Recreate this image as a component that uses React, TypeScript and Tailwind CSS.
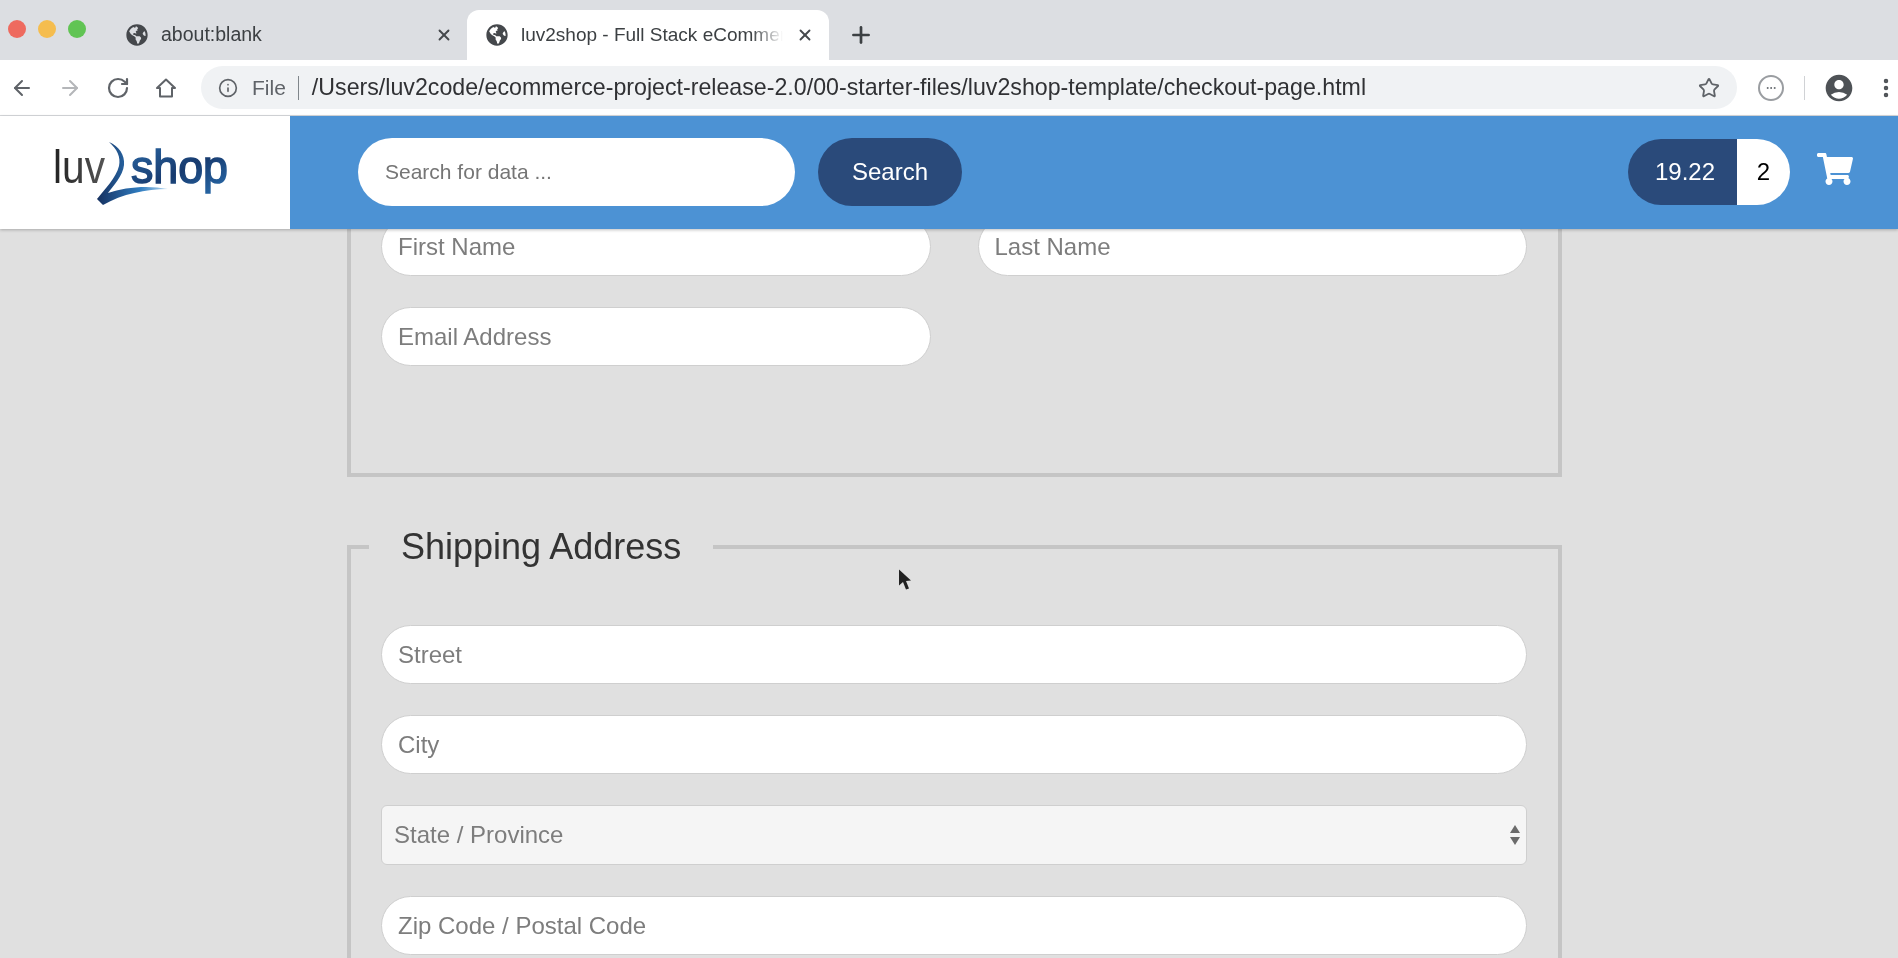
import { ArrowLeft, ArrowRight, Ellipsis, EllipsisVertical, Info, Plus, RotateCw, Star, X } from 'lucide-react';
import { FaGlobeAmericas, FaShoppingCart } from 'react-icons/fa';
import { MdAccountCircle } from 'react-icons/md';

const inputClass =
  'w-full h-[59px] rounded-full bg-white border border-[#cfcfcf] px-4 text-[24px] text-[#333] placeholder:text-[#7d7d7d] outline-none';

function Logo() {
  return (
    <svg viewBox="0 0 290 113" className="w-[290px] h-[113px]">
      <defs>
        <linearGradient id="shopFill" x1="0" y1="0" x2="1" y2="1">
          <stop offset="0" stopColor="#2c6aa8" />
          <stop offset="0.55" stopColor="#173a6e" />
          <stop offset="1" stopColor="#2a6fb0" />
        </linearGradient>
        <linearGradient id="luvFill" x1="0" y1="0" x2="1" y2="0">
          <stop offset="0" stopColor="#222" />
          <stop offset="1" stopColor="#555" />
        </linearGradient>
        <linearGradient id="swooshFill" x1="0" y1="0" x2="1" y2="0">
          <stop offset="0" stopColor="#16305f" />
          <stop offset="0.6" stopColor="#2f7cc0" />
          <stop offset="1" stopColor="#b8d8f0" />
        </linearGradient>
      </defs>
      <text x="53" y="67" fontFamily="Liberation Sans, sans-serif" fontSize="46" fill="url(#luvFill)" textLength="52" lengthAdjust="spacingAndGlyphs">
        luv
      </text>
      <text x="131" y="67" fontFamily="Liberation Sans, sans-serif" fontSize="46" stroke="url(#shopFill)" strokeWidth="1.5" fill="url(#shopFill)" textLength="97" lengthAdjust="spacingAndGlyphs">
        shop
      </text>
      <path
        d="M109 26 C119 30 125 39 124 49 C123 60 113 70 108 77 C125 71 148 69 168 73 C146 73 122 78 103 89 L97 83 C105 73 116 62 119 50 C121 41 117 33 109 26 Z"
        fill="url(#swooshFill)"
      />
    </svg>
  );
}

function BrowserChrome() {
  return (
    <div className="font-['Liberation_Sans',sans-serif]">
      <div className="h-[60px] bg-[#dcdee2] flex items-end">
        <div className="flex gap-[12px] pl-[8px] self-center -mt-[2px] w-[121px]">
          <span className="w-[18px] h-[18px] rounded-full bg-[#ee6a5f]" />
          <span className="w-[18px] h-[18px] rounded-full bg-[#f5bd4f]" />
          <span className="w-[18px] h-[18px] rounded-full bg-[#61c454]" />
        </div>
        <div className="w-[346px] h-[50px] flex items-center pl-[5px] pr-[14px] gap-[13px] text-[#3c4043] text-[19.5px]">
          <FaGlobeAmericas className="w-[22px] h-[22px] text-[#45484c] shrink-0" />
          <span className="flex-1">about:blank</span>
          <X className="w-[18px] h-[18px] text-[#45484c]" strokeWidth={2.5} />
        </div>
        <div className="w-[362px] h-[50px] bg-white rounded-t-[12px] flex items-center pl-[19px] pr-[15px] gap-[13px] text-[#3c4043] text-[19px]">
          <FaGlobeAmericas className="w-[22px] h-[22px] text-[#45484c] shrink-0" />
          <span className="flex-1 whitespace-nowrap overflow-hidden [mask-image:linear-gradient(to_right,black_88%,transparent)]">
            luv2shop - Full Stack eCommerce
          </span>
          <X className="w-[18px] h-[18px] text-[#45484c] shrink-0" strokeWidth={2.5} />
        </div>
        <div className="h-[50px] flex items-center pl-[19px]">
          <Plus className="w-[26px] h-[26px] text-[#3c4043]" strokeWidth={2.5} />
        </div>
      </div>
      <div className="h-[56px] bg-white flex items-center border-b border-[#d8dadd]">
        <div className="w-[201px] flex items-center pl-[10px] gap-[24px] text-[#5f6368]">
          <ArrowLeft className="w-[24px] h-[24px]" strokeWidth={2} />
          <ArrowRight className="w-[24px] h-[24px] text-[#b4b6b9]" strokeWidth={2} />
          <RotateCw className="w-[24px] h-[24px]" strokeWidth={2.2} />
          <svg viewBox="0 0 24 24" className="w-[24px] h-[24px] fill-none stroke-[#5f6368] stroke-2">
            <path d="M12 3.5 L3 12 H6 V20.5 H18 V12 H21 Z" strokeLinejoin="round" />
          </svg>
        </div>
        <div className="w-[1536px] h-[43px] rounded-full bg-[#f0f2f4] flex items-center pl-[17px] pr-[17px]">
          <Info className="w-[20px] h-[20px] text-[#5f6368] shrink-0" />
          <span className="ml-[14px] text-[21px] text-[#5f6368]">File</span>
          <span className="ml-[12px] w-px h-[24px] bg-[#80868b]" />
          <span className="ml-[13px] flex-1 text-[23.2px] text-[#303134] whitespace-nowrap">
            /Users/luv2code/ecommerce-project-release-2.0/00-starter-files/luv2shop-template/checkout-page.html
          </span>
          <Star className="w-[22px] h-[22px] text-[#5f6368]" strokeWidth={2} />
        </div>
        <div className="flex-1 flex items-center pl-[21px] text-[#5f6368]">
          <span className="w-[26px] h-[26px] rounded-full border-2 border-[#9a9da1] flex items-center justify-center">
            <Ellipsis className="w-[12px] h-[12px]" />
          </span>
          <span className="ml-[20px] w-px h-[24px] bg-[#d0d2d5]" />
          <MdAccountCircle className="ml-[18px] w-[32px] h-[32px] text-[#4e5256]" />
          <EllipsisVertical className="ml-[19px] w-[24px] h-[24px] text-[#4e5256]" strokeWidth={2.5} />
        </div>
      </div>
    </div>
  );
}

function Header() {
  return (
    <header className="relative z-10 h-[113px] flex shadow-[0_1px_3px_rgba(0,0,0,0.25)]">
      <div className="w-[290px] bg-white">
        <Logo />
      </div>
      <div className="flex-1 bg-[#4c92d4] flex items-center pl-[68px] pr-[45px] pb-[2px]">
        <input
          className="w-[437px] h-[68px] rounded-full bg-white px-[27px] text-[21px] placeholder:text-[#757575] outline-none"
          placeholder="Search for data ..."
        />
        <button className="ml-[23px] w-[144px] h-[68px] rounded-full bg-[#2a4a7a] text-white text-[24px]">Search</button>
        <div className="ml-auto flex items-center h-[66px]">
          <div className="w-[109px] h-full rounded-l-full bg-[#2a4a7a] text-white text-[24px] flex items-center justify-center pl-[5px]">
            19.22
          </div>
          <div className="w-[53px] h-full rounded-r-full bg-white text-black text-[24px] flex items-center justify-center">
            2
          </div>
          <FaShoppingCart className="ml-[27px] w-[36px] h-[32px] text-white -mt-[5px]" />
        </div>
      </div>
    </header>
  );
}

export default function App() {
  return (
    <div className="w-[1898px] h-[958px] overflow-hidden relative bg-[#e0e0e0] font-['Liberation_Sans',sans-serif] blur-[0.4px]">
      <BrowserChrome />
      <Header />
      <main className="pl-[347px] w-[1562px] -mt-[39px]">
        <div className="w-[1215px] h-[287px] border-4 border-[#c5c5c5] pt-[23px] px-[30px]">
          <div className="grid grid-cols-2 gap-x-[47px] gap-y-[31px] pr-[1px]">
            <input className={inputClass} placeholder="First Name" />
            <input className={inputClass} placeholder="Last Name" />
            <input className={inputClass} placeholder="Email Address" />
          </div>
        </div>
        <fieldset className="mt-[48px] w-[1215px] border-4 border-[#c5c5c5] px-[30px] pb-[40px]">
          <legend className="-ml-[12px] px-[32px] h-[44px] text-[36px] leading-[44px] text-[#333]">Shipping Address</legend>
          <div className="mt-[56px] flex flex-col gap-[31px] pr-[1px]">
            <input className={inputClass} placeholder="Street" />
            <input className={inputClass} placeholder="City" />
            <div className="relative">
              <select
                defaultValue=""
                className="w-full h-[60px] appearance-none rounded-[6px] bg-[#f5f5f5] border border-[#cfcfcf] pl-[12px] text-[24px] text-[#7d7d7d] outline-none"
              >
                <option value="">State / Province</option>
              </select>
              <svg viewBox="0 0 12 22" className="absolute right-[6px] top-[19px] w-[12px] h-[22px] fill-[#6b6b6b]">
                <path d="M6 1 L11 9 H1 Z M1 13 H11 L6 21 Z" />
              </svg>
            </div>
            <input className={inputClass} placeholder="Zip Code / Postal Code" />
          </div>
        </fieldset>
      </main>
      {/* mouse pointer caught in the recording */}
      <svg viewBox="0 0 16 24" className="absolute left-[898px] top-[568px] w-[16px] h-[25px] fill-[#222]">
        <path d="M1 1 L1 17 L5 13.5 L8 21 L11 20 L8 12.5 L13 12 Z" />
      </svg>
    </div>
  );
}
